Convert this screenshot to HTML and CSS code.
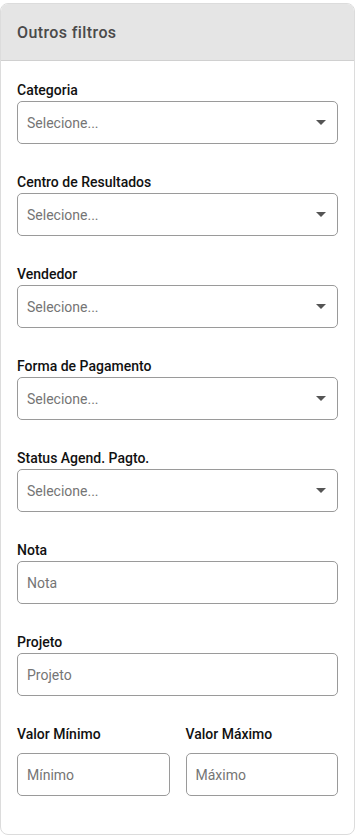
FILE: index.html
```html
<!DOCTYPE html>
<html lang="pt-BR">
<head>
    <meta charset="UTF-8">
    <meta name="viewport" content="width=device-width, initial-scale=1.0">
    <title>Outros filtros</title>
    <link rel="stylesheet" href="styles.css">
</head>
<body>
    <div class="card">
        <div class="card-header">Outros filtros</div>

        <div class="card-body">
            <div class="field">
                <label>Categoria</label>
                <div class="select">
                    <span>Selecione...</span>
                    <svg class="caret" width="10" height="5" viewBox="0 0 10 5"><path d="M0 0h10L5 5z" fill="#555"/></svg>
                </div>
            </div>

            <div class="field">
                <label>Centro de Resultados</label>
                <div class="select">
                    <span>Selecione...</span>
                    <svg class="caret" width="10" height="5" viewBox="0 0 10 5"><path d="M0 0h10L5 5z" fill="#555"/></svg>
                </div>
            </div>

            <div class="field">
                <label>Vendedor</label>
                <div class="select">
                    <span>Selecione...</span>
                    <svg class="caret" width="10" height="5" viewBox="0 0 10 5"><path d="M0 0h10L5 5z" fill="#555"/></svg>
                </div>
            </div>

            <div class="field">
                <label>Forma de Pagamento</label>
                <div class="select">
                    <span>Selecione...</span>
                    <svg class="caret" width="10" height="5" viewBox="0 0 10 5"><path d="M0 0h10L5 5z" fill="#555"/></svg>
                </div>
            </div>

            <div class="field">
                <label>Status Agend. Pagto.</label>
                <div class="select">
                    <span>Selecione...</span>
                    <svg class="caret" width="10" height="5" viewBox="0 0 10 5"><path d="M0 0h10L5 5z" fill="#555"/></svg>
                </div>
            </div>

            <div class="field">
                <label for="nota">Nota</label>
                <input id="nota" class="text-input" placeholder="Nota">
            </div>

            <div class="field">
                <label for="projeto">Projeto</label>
                <input id="projeto" class="text-input" placeholder="Projeto">
            </div>

            <div class="field-row">
                <div class="field field-wide">
                    <label for="minimo">Valor Mínimo</label>
                    <input id="minimo" class="text-input" placeholder="Mínimo">
                </div>
                <div class="field field-wide">
                    <label for="maximo">Valor Máximo</label>
                    <input id="maximo" class="text-input" placeholder="Máximo">
                </div>
            </div>
        </div>
    </div>
</body>
</html>
```

FILE: styles.css
```css
body {
    margin: 0;
    padding-top: 3px;
    font-family: Roboto, "Liberation Sans", sans-serif;
    background: #fff;
}
.card {
    width: 355px;
    box-sizing: border-box;
    border: 1px solid #dcdcdc;
    border-radius: 8px;
    overflow: hidden;
}
.card-header {
    height: 57px;
    box-sizing: border-box;
    padding: 0 16px;
    display: flex;
    align-items: center;
    background: #e5e5e5;
    border-bottom: 1px solid #d0d0d0;
    color: #4a4a4a;
    font-size: 16px;
    font-weight: 500;
    letter-spacing: 0.4px;
}
.card-body {
    padding: 20px 16px 38px;
}
.field {
    display: flex;
    flex-direction: column;
    margin-bottom: 29px;
}
.field label {
    font-size: 14px;
    font-weight: 500;
    line-height: 18px;
    color: #111;
    margin-bottom: 2px;
}
.select,
.text-input {
    height: 43px;
    box-sizing: border-box;
    border: 1px solid #9a9a9a;
    border-radius: 5px;
    padding: 0 9px;
    font-family: inherit;
    font-size: 14px;
    color: #757575;
    background: #fff;
}
.select {
    display: flex;
    align-items: center;
    justify-content: space-between;
    padding-right: 11px;
}
.text-input {
    width: 100%;
    outline: none;
}
.text-input::placeholder {
    color: #757575;
}
.field-row {
    display: flex;
    gap: 16px;
}
.field-wide {
    flex: 1;
    margin-bottom: 0;
}
.field-wide label {
    margin-bottom: 10px;
}
```
